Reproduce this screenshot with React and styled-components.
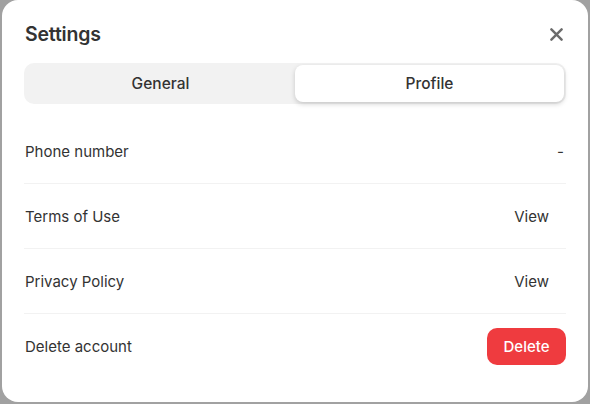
import React, { useState } from 'react'
import styled, { createGlobalStyle } from 'styled-components'

const Global = createGlobalStyle`
  html, body {
    margin: 0;
    padding: 0;
    background: #a1a1a1;
    font-family: Inter, "Noto Sans", sans-serif;
    color: #333;
  }
`

const Dialog = styled.div`
  box-sizing: border-box;
  margin-left: 2px;
  width: 586px;
  height: 402px;
  background: #fff;
  border-radius: 16px;
  padding: 22px 22px 0 22px;
  display: flex;
  flex-direction: column;
`

const Header = styled.div`
  display: flex;
  align-items: center;
  justify-content: space-between;
  height: 24px;
  padding-left: 1px;
`

const Title = styled.h2`
  margin: 0;
  font-size: 19.5px;
  font-weight: 600;
  color: #333;
  letter-spacing: -0.2px;
`

const Close = styled.button`
  border: 0;
  background: none;
  padding: 0;
  width: 24px;
  height: 24px;
  display: flex;
  align-items: center;
  justify-content: center;
  color: #6b6b6b;
  margin-right: -2px;
  cursor: pointer;
`

const TabBar = styled.div`
  margin-top: 17px;
  display: flex;
  background: #f2f2f2;
  border-radius: 10px;
  padding: 2px;
  height: 41px;
  box-sizing: border-box;
`

const Tab = styled.button`
  flex: 1;
  border: 0;
  font-family: inherit;
  font-size: 15.5px;
  font-weight: 500;
  color: #333;
  border-radius: 8px;
  cursor: pointer;
  background: ${({ $active }) => ($active ? '#fff' : 'transparent')};
  box-shadow: ${({ $active }) => ($active ? '0 2px 5px rgba(0,0,0,0.18)' : 'none')};
`

const List = styled.div`
  margin-top: 15px;
  display: flex;
  flex-direction: column;
`

const Row = styled.div`
  display: flex;
  align-items: center;
  justify-content: space-between;
  height: 64px;
  padding-left: 1px;
  border-bottom: ${({ $last }) => ($last ? 'none' : '1px solid #f2f2f2')};
`

const Label = styled.span`
  font-size: 15px;
  color: #333;
`

const Value = styled.span`
  font-size: 15px;
  color: #333;
  padding-right: 2px;
`

const LinkButton = styled.button`
  border: 0;
  background: none;
  font-family: inherit;
  font-size: 15px;
  color: #333;
  padding: 8px 17px 8px 16px;
  cursor: pointer;
`

const DangerButton = styled.button`
  border: 0;
  background: #ef3b3f;
  color: #fff;
  font-family: inherit;
  font-size: 15px;
  font-weight: 500;
  height: 37px;
  width: 79px;
  padding: 0;
  margin-top: 0;
  border-radius: 10px;
  cursor: pointer;
`

export default function App() {
  const [tab, setTab] = useState('Profile')
  return (
    <>
      <Global />
      <Dialog>
        <Header>
          <Title>Settings</Title>
          <Close aria-label="Close">
            <svg width="13" height="13" viewBox="0 0 14 14">
              <path d="M1.5 1.5 L12.5 12.5 M12.5 1.5 L1.5 12.5" stroke="currentColor" strokeWidth="2.6" strokeLinecap="round" />
            </svg>
          </Close>
        </Header>
        <TabBar>
          {['General', 'Profile'].map(t => (
            <Tab key={t} $active={t === tab} onClick={() => setTab(t)}>{t}</Tab>
          ))}
        </TabBar>
        <List>
          <Row>
            <Label>Phone number</Label>
            <Value>-</Value>
          </Row>
          <Row>
            <Label>Terms of Use</Label>
            <LinkButton>View</LinkButton>
          </Row>
          <Row>
            <Label>Privacy Policy</Label>
            <LinkButton>View</LinkButton>
          </Row>
          <Row $last>
            <Label>Delete account</Label>
            <DangerButton>Delete</DangerButton>
          </Row>
        </List>
      </Dialog>
    </>
  )
}
